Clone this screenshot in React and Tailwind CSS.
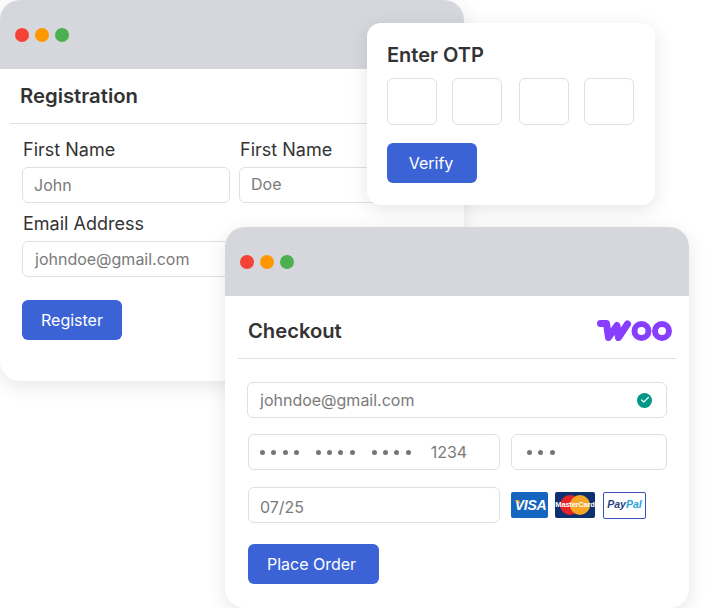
import React from "react";
import { Check } from "lucide-react";

const Dots = ({ className }) => (
  <div className={`flex items-center gap-[6px] ${className}`}>
    <span className="w-[14px] h-[14px] rounded-full bg-[#f44336]" />
    <span className="w-[14px] h-[14px] rounded-full bg-[#ff9800]" />
    <span className="w-[14px] h-[14px] rounded-full bg-[#4caf50]" />
  </div>
);

const Field = ({ className = "", children }) => (
  <div className={`flex items-center border border-[#e0e0e0] rounded-md bg-white text-base text-[#7a7a7a] ${className}`}>
    {children}
  </div>
);

const Button = ({ className = "", children }) => (
  <div className={`flex items-center justify-center h-10 rounded-md bg-[#3b63d6] text-white text-base ${className}`}>
    {children}
  </div>
);

const Bullets = ({ count }) => (
  <span className="flex gap-[6.3px]">
    {Array.from({ length: count }).map((_, i) => (
      <span key={i} className="w-[5px] h-[5px] rounded-full bg-[#757575]" />
    ))}
  </span>
);

const WooLogo = () => (
  <svg width="76" height="22" viewBox="0 0 76 22" className="block">
    <path
      d="M3.5 3.5 H9.5 L11.5 17.5 L20 5.5 L21.5 17.5 L30.5 4"
      fill="none"
      stroke="#873eff"
      strokeWidth="7"
      strokeLinecap="round"
      strokeLinejoin="round"
    />
    <circle cx="44.5" cy="11" r="7" fill="none" stroke="#873eff" strokeWidth="6" />
    <circle cx="65" cy="11" r="7" fill="none" stroke="#873eff" strokeWidth="6" />
  </svg>
);

const Visa = () => (
  <div className="relative w-[37px] h-[26px] rounded-[2px] bg-[#1565c0] flex items-center justify-center pl-[2px] text-white font-bold italic text-[14px] tracking-[-0.3px] font-['Liberation_Sans',sans-serif]">
    <svg width="7" height="5" viewBox="0 0 7 5" className="absolute left-[3px] top-[8px]">
      <path d="M0 0 H5 L7 5 C5 2.5 3 1 0 0 Z" fill="#f9a825" />
    </svg>
    VISA
  </div>
);

const MasterCard = () => (
  <div className="relative w-10 h-[26px] rounded-[2px] bg-[#0c3070] flex items-center justify-center">
    <svg width="32" height="22" viewBox="0 0 32 22" className="block">
      <circle cx="11" cy="11" r="10" fill="#e3242b" />
      <circle cx="21" cy="11" r="10" fill="#f5a623" />
    </svg>
    <span className="absolute inset-0 flex items-center justify-center text-white font-bold text-[7.5px] tracking-[-0.2px] font-['Liberation_Sans',sans-serif]">
      MasterCard
    </span>
  </div>
);

const PayPal = () => (
  <div className="w-[43px] h-[27px] rounded-[2px] border border-[#3b4fb8] bg-white flex items-center justify-center font-bold italic text-[10.5px] font-['Liberation_Sans',sans-serif]">
    <span className="text-[#2a3f80]">Pay</span>
    <span className="text-[#27a3dc]">Pal</span>
  </div>
);

export default function App() {
  return (
    <div className="relative w-[719px] h-[608px] overflow-hidden bg-white text-[#333333] font-['Inter',sans-serif]">
      {/* Registration window */}
      <div className="absolute left-0 top-0 w-[464px] h-[381px] rounded-[20px] bg-white overflow-hidden shadow-[0_5px_20px_rgba(0,0,0,0.1)]">
        <div className="h-[69px] bg-[#d6d7dc] flex items-center">
          <Dots className="ml-[15px]" />
        </div>
        <div className="ml-[10px] h-[55px] pl-[10px] flex items-center border-b border-[#e0e0e0] text-[20.3px] font-semibold">
          Registration
        </div>
        <div className="pl-[22px] pt-[13px]">
          <div className="flex gap-[9px]">
            <div>
              <div className="pl-px text-lg leading-[26px] mb-[4px]">First Name</div>
              <Field className="w-[208px] h-9 pl-[11px]">John</Field>
            </div>
            <div>
              <div className="pl-px text-lg leading-[26px] mb-[4px]">First Name</div>
              <Field className="w-[180px] h-9 pl-[11px] pb-[2px]">Doe</Field>
            </div>
          </div>
          <div className="pl-px text-lg leading-[26px] mt-2 mb-[4px]">Email Address</div>
          <Field className="w-[300px] h-9 pl-[12px]">johndoe@gmail.com</Field>
          <Button className="w-[100px] mt-[23px]">Register</Button>
        </div>
      </div>

      {/* OTP card */}
      <div className="absolute left-[367px] top-[23px] w-[288px] h-[182px] rounded-[14px] bg-white px-5 pt-[18px] shadow-[0_5px_20px_rgba(0,0,0,0.1)]">
        <div className="text-xl font-semibold leading-7">Enter OTP</div>
        <div className="flex mt-[9px]">
          <div className="w-[50px] h-[47px] rounded-md border border-[#e0e0e0]" />
          <div className="w-[50px] h-[47px] rounded-md border border-[#e0e0e0] ml-[15px]" />
          <div className="w-[50px] h-[47px] rounded-md border border-[#e0e0e0] ml-[17px]" />
          <div className="w-[50px] h-[47px] rounded-md border border-[#e0e0e0] ml-[15px]" />
        </div>
        <Button className="w-[90px] mt-[18px] pr-[2px]">Verify</Button>
      </div>

      {/* Checkout window */}
      <div className="absolute left-[225px] top-[227px] w-[464px] h-[381px] rounded-[20px] bg-white overflow-hidden shadow-[0_5px_20px_rgba(0,0,0,0.1)]">
        <div className="h-[69px] bg-[#d6d7dc] flex items-center">
          <Dots className="ml-[15px]" />
        </div>
        <div className="mx-[13px] h-[63px] pl-[10px] pr-[3px] pt-[8px] flex items-center justify-between border-b border-[#e0e0e0] text-[20.2px] font-semibold">
          <span>Checkout</span>
          <WooLogo />
        </div>
        <div className="pl-[23px] pt-[23px]">
          <Field className="-ml-px w-[420px] h-9 pl-[12px] pr-[14px] justify-between">
            <span>johndoe@gmail.com</span>
            <span className="w-[15px] h-[15px] rounded-full bg-[#009688] flex items-center justify-center">
              <Check size={10} strokeWidth={3} className="text-white" />
            </span>
          </Field>
          <div className="flex gap-[11px] mt-4">
            <Field className="w-[252px] h-9 pl-[11px]">
              <Bullets count={4} />
              <span className="ml-[17px]"><Bullets count={4} /></span>
              <span className="ml-[17px]"><Bullets count={4} /></span>
              <span className="ml-[20px]">1234</span>
            </Field>
            <Field className="w-[156px] h-9 pl-[15px]">
              <Bullets count={3} />
            </Field>
          </div>
          <div className="flex items-center mt-[17px]">
            <Field className="w-[252px] h-9 pl-[11px] pt-1">07/25</Field>
            <div className="flex items-center ml-[11px]">
              <Visa />
              <div className="ml-[7px]"><MasterCard /></div>
              <div className="ml-2"><PayPal /></div>
            </div>
          </div>
          <Button className="w-[131px] mt-[21px] pr-1">Place Order</Button>
        </div>
      </div>
    </div>
  );
}
